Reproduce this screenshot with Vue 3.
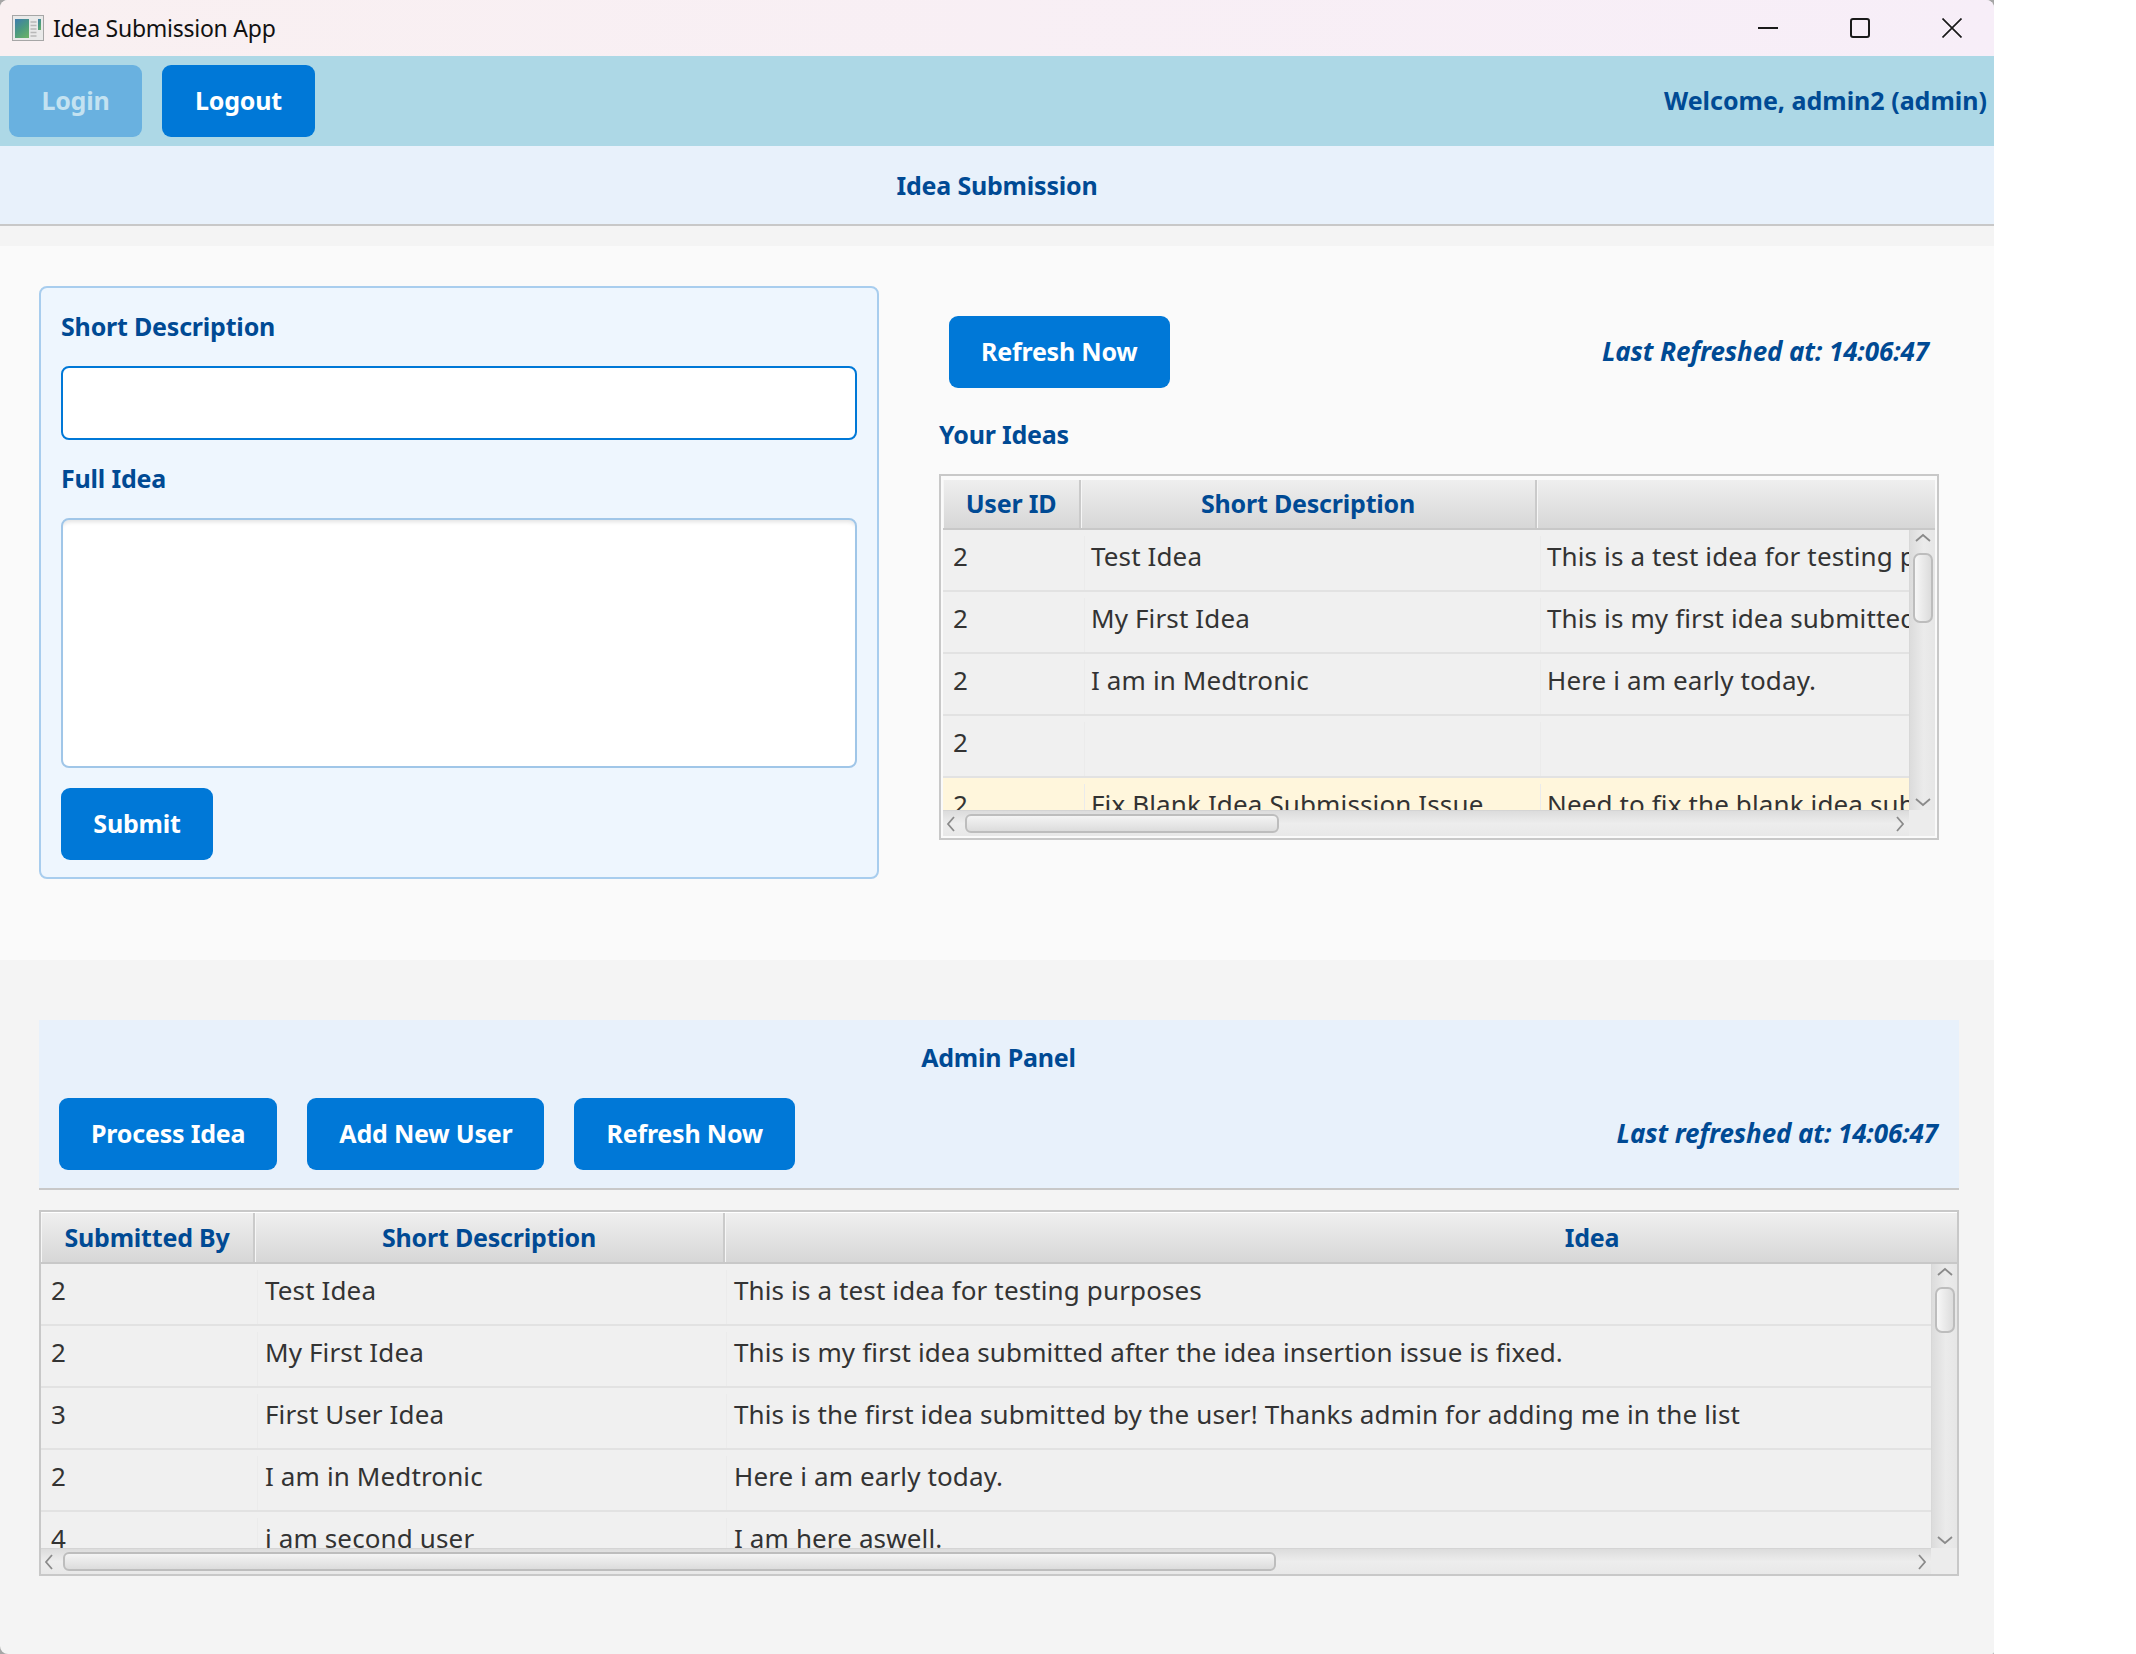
<script setup>
const myIdeas = [
  { id: '2', short: 'Test Idea', idea: 'This is a test idea for testing purposes' },
  { id: '2', short: 'My First Idea', idea: 'This is my first idea submitted after the idea insertion issue is fixed.' },
  { id: '2', short: 'I am in Medtronic', idea: 'Here i am early today.' },
  { id: '2', short: '', idea: '' },
  { id: '2', short: 'Fix Blank Idea Submission Issue', idea: 'Need to fix the blank idea submission issue', warn: true }
]
const allIdeas = [
  { id: '2', short: 'Test Idea', idea: 'This is a test idea for testing purposes' },
  { id: '2', short: 'My First Idea', idea: 'This is my first idea submitted after the idea insertion issue is fixed.' },
  { id: '3', short: 'First User Idea', idea: 'This is the first idea submitted by the user! Thanks admin for adding me in the list' },
  { id: '2', short: 'I am in Medtronic', idea: 'Here i am early today.' },
  { id: '4', short: 'i am second user', idea: 'I am here aswell.' }
]
</script>

<template>
  <div class="desktop">
  <div class="window">
    <header class="titlebar">
      <div class="title-left">
        <svg class="app-icon" width="32" height="26" viewBox="0 0 32 26">
          <defs>
            <linearGradient id="pane" x1="0.2" y1="0" x2="0.8" y2="1">
              <stop offset="0" stop-color="#4080a8" />
              <stop offset="0.5" stop-color="#4b9a80" />
              <stop offset="1" stop-color="#68b068" />
            </linearGradient>
          </defs>
          <rect x="0.5" y="0.5" width="31" height="25" fill="#e9e9e9" stroke="#a6a6a6" />
          <rect x="3" y="4" width="14" height="19" fill="url(#pane)" />
          <path d="M18.500 7h6M18.500 10.500h6M18.500 14h6M18.500 17.500h6M18.500 21h6" stroke="#b8b8b8" stroke-width="1.400" />
          <rect x="26" y="4" width="3" height="11" fill="url(#pane)" />
        </svg>
        <span class="app-title">Idea Submission App</span>
      </div>
      <div class="win-controls">
        <svg width="20" height="20" viewBox="0 0 20 20"><path d="M0 10h20" stroke="#1a1a1a" stroke-width="2" /></svg>
        <svg width="20" height="20" viewBox="0 0 20 20"><rect x="1" y="1" width="18" height="18" rx="2" fill="none" stroke="#1a1a1a" stroke-width="2" /></svg>
        <svg width="20" height="20" viewBox="0 0 20 20"><path d="M0.500 0.500l19 19M19.500 0.500l-19 19" stroke="#1a1a1a" stroke-width="1.700" /></svg>
      </div>
    </header>

    <nav class="topbar">
      <div class="topbar-actions">
        <button class="btn btn-disabled">Login</button>
        <button class="btn logout">Logout</button>
      </div>
      <span class="welcome">Welcome, admin2 (admin)</span>
    </nav>

    <div class="page-heading">Idea Submission</div>

    <main class="user-section">
      <form class="idea-form" @submit.prevent>
        <label class="field-label">Short Description</label>
        <input class="text-input" type="text" />
        <label class="field-label full-label">Full Idea</label>
        <textarea class="text-area"></textarea>
        <button class="btn submit">Submit</button>
      </form>

      <section class="ideas-col">
        <div class="refresh-row">
          <button class="btn">Refresh Now</button>
          <span class="stamp">Last Refreshed at: 14:06:47</span>
        </div>
        <h2 class="your-ideas">Your Ideas</h2>
        <div class="table table-user">
          <div class="thead cols-user">
            <div class="th">User ID</div>
            <div class="th">Short Description</div>
            <div class="th th-last"></div>
          </div>
          <div class="tbody-wrap">
            <div class="viewport">
              <div v-for="(r, i) in myIdeas" :key="i" class="row cols-user" :class="{ warn: r.warn }">
                <div class="td">{{ r.id }}</div>
                <div class="td">{{ r.short }}</div>
                <div class="td">{{ r.idea }}</div>
              </div>
            </div>
            <div class="vbar">
              <svg width="16" height="10" viewBox="0 0 16 10"><path d="M1 8l7-6 7 6" fill="none" stroke="#8a8a8a" stroke-width="1.800" /></svg>
              <div class="vthumb"></div>
              <svg class="arrow-end" width="16" height="10" viewBox="0 0 16 10"><path d="M1 2l7 6 7-6" fill="none" stroke="#8a8a8a" stroke-width="1.800" /></svg>
            </div>
          </div>
          <div class="hbar-wrap">
            <div class="hbar">
              <svg width="10" height="16" viewBox="0 0 10 16"><path d="M8 1L2 8l6 7" fill="none" stroke="#8a8a8a" stroke-width="1.800" /></svg>
              <div class="hthumb"></div>
              <svg class="arrow-end" width="10" height="16" viewBox="0 0 10 16"><path d="M2 1l6 7-6 7" fill="none" stroke="#8a8a8a" stroke-width="1.800" /></svg>
            </div>
            <div class="corner"></div>
          </div>
        </div>
      </section>
    </main>

    <section class="admin-section">
      <div class="admin-panel">
        <h2 class="admin-title">Admin Panel</h2>
        <div class="admin-actions">
          <button class="btn">Process Idea</button>
          <button class="btn">Add New User</button>
          <button class="btn">Refresh Now</button>
          <span class="stamp admin-stamp">Last refreshed at: 14:06:47</span>
        </div>
      </div>
      <div class="table table-admin">
        <div class="thead cols-admin">
          <div class="th">Submitted By</div>
          <div class="th">Short Description</div>
          <div class="th th-last">Idea</div>
        </div>
        <div class="tbody-wrap">
          <div class="viewport">
            <div v-for="(r, i) in allIdeas" :key="i" class="row cols-admin">
              <div class="td">{{ r.id }}</div>
              <div class="td">{{ r.short }}</div>
              <div class="td">{{ r.idea }}</div>
            </div>
          </div>
          <div class="vbar">
            <svg width="16" height="10" viewBox="0 0 16 10"><path d="M1 8l7-6 7 6" fill="none" stroke="#8a8a8a" stroke-width="1.800" /></svg>
            <div class="vthumb"></div>
            <svg class="arrow-end" width="16" height="10" viewBox="0 0 16 10"><path d="M1 2l7 6 7-6" fill="none" stroke="#8a8a8a" stroke-width="1.800" /></svg>
          </div>
        </div>
        <div class="hbar-wrap">
          <div class="hbar">
            <svg width="10" height="16" viewBox="0 0 10 16"><path d="M8 1L2 8l6 7" fill="none" stroke="#8a8a8a" stroke-width="1.800" /></svg>
            <div class="hthumb"></div>
            <svg class="arrow-end" width="10" height="16" viewBox="0 0 10 16"><path d="M2 1l6 7-6 7" fill="none" stroke="#8a8a8a" stroke-width="1.800" /></svg>
          </div>
          <div class="corner"></div>
        </div>
      </div>
    </section>
  </div>
  </div>
</template>

<style>
html, body { background: #ffffff; }
</style>

<style scoped>
.desktop { width: 1994px; height: 1654px; background: #a6a6a6; }
.window {
  width: 1994px;
  height: 1654px;
  display: flex;
  flex-direction: column;
  background: #f4f4f4;
  overflow: hidden;
  border-radius: 8px 8px 2px 8px;
  font-family: "Noto Sans", "Open Sans", sans-serif;
  color: #333333;
}
.titlebar {
  flex: none;
  height: 56px;
  display: flex;
  align-items: center;
  justify-content: space-between;
  background: linear-gradient(90deg, #f9f0f1, #f7eef8);
}
.title-left { display: flex; align-items: center; padding-left: 12px; }
.app-title { margin-left: 9px; font-size: 23px; color: #111111; letter-spacing: -0.25px; }
.win-controls { display: flex; gap: 72px; padding-right: 32px; }
.topbar {
  flex: none;
  height: 90px;
  display: flex;
  align-items: center;
  justify-content: space-between;
  background: #add8e6;
  padding: 0 7px 0 9px;
}
.topbar-actions { display: flex; gap: 20px; align-items: center; }
.btn {
  height: 72px;
  padding: 0 32px 3px;
  border: none;
  border-radius: 9px;
  background: #0078d7;
  color: #ffffff;
  font: bold 25px "Noto Sans", "Open Sans", sans-serif;
  letter-spacing: -0.2px;
}
.logout { width: 153px; padding: 0 0 3px; }
.btn-disabled { background: #69b1e0; color: #c3e2f1; width: 133px; padding: 0 0 3px; }
.welcome, .stamp, .page-heading, .field-label, .your-ideas, .admin-title, .th {
  font-weight: bold;
  font-size: 25px;
  line-height: 30px;
  color: #004a94;
  letter-spacing: -0.2px;
}
.welcome { letter-spacing: 0; padding-bottom: 2px; }
.stamp { font-size: 26px; font-style: italic; letter-spacing: -0.1px; padding-bottom: 3px; }
.page-heading {
  flex: none;
  height: 80px;
  box-sizing: border-box;
  display: flex;
  align-items: center;
  justify-content: center;
  padding-bottom: 1px;
  background: #e8f1fb;
  border-bottom: 2px solid #c8c8c8;
}
.field-label, .your-ideas, .admin-title { line-height: 28px; padding-bottom: 2px; }
.user-section {
  flex: none;
  height: 714px;
  box-sizing: border-box;
  margin-top: 20px;
  padding: 40px 55px 0 39px;
  background: #fafafa;
  display: grid;
  grid-template-columns: 840px 1000px;
  column-gap: 60px;
  align-items: start;
}
.idea-form {
  display: flex;
  flex-direction: column;
  align-items: flex-start;
  box-sizing: border-box;
  height: 593px;
  padding: 24px 20px 17px;
  border: 2px solid #a8cdee;
  border-radius: 8px;
  background: #eef6fe;
}
.field-label { display: block; }
.text-input {
  display: block;
  box-sizing: border-box;
  width: 796px;
  height: 74px;
  margin: 24px 0 0;
  border: 2px solid #0078d7;
  border-radius: 8px;
  background: #ffffff;
  outline: none;
}
.full-label { margin-top: 24px; }
.text-area {
  display: block;
  box-sizing: border-box;
  width: 796px;
  height: 250px;
  margin: 24px 0 0;
  border: 2px solid #a0c6e8;
  border-radius: 8px;
  background: #ffffff;
  box-shadow: inset 0 5px 4px -3px #e2e2e2;
  outline: none;
  resize: none;
}
.submit { margin-top: 20px; width: 152px; padding: 0 0 3px; }
.ideas-col { display: flex; flex-direction: column; padding-top: 30px; }
.refresh-row {
  display: flex;
  align-items: center;
  justify-content: space-between;
  padding: 0 10px;
}
.your-ideas { margin: 32px 0 24px; }
.table {
  display: flex;
  flex-direction: column;
  box-sizing: border-box;
  border: 2px solid #c8c8c8;
  background: #fafafa;
}
.table-user { height: 366px; padding: 4px 2px 2px; }
.table-admin { height: 366px; margin-top: 20px; background: #f4f4f4; }
.thead {
  flex: none;
  height: 50px;
  box-sizing: border-box;
  border-bottom: 2px solid #c8c8c8;
  overflow: hidden;
}
.table-admin .thead { height: 52px; border-top: 1px solid #ffffff; }
.cols-user { display: grid; grid-template-columns: 138px 456px 1fr; }
.cols-admin { display: grid; grid-template-columns: 213px 469px 1fr; }
.thead.cols-admin { grid-template-columns: 214px 470px 1734px; }
.th {
  display: flex;
  align-items: center;
  justify-content: center;
  padding-bottom: 2px;
  box-sizing: border-box;
  background: linear-gradient(180deg, #efefef, #d7d7d7);
  border-right: 2px solid #cacaca;
  box-shadow: inset 1px 0 0 #f6f6f6;
}
.th-last { border-right: none; }
.tbody-wrap { flex: 1; min-height: 0; display: flex; }
.viewport { flex: 1; min-width: 0; overflow: hidden; background: #f0f0f0; }
.row { height: 62px; box-sizing: border-box; border-bottom: 2px solid #e2e2e2; background: #f0f0f0; }
.row.warn { background: #fff6dc; }
.td {
  position: relative;
  height: 54px;
  padding: 0 0 6px 11px;
  font-size: 26px;
  line-height: 52px;
  white-space: nowrap;
  overflow: hidden;
  letter-spacing: 0.13px;
}
.td:first-child { padding-left: 10px; }
.table-user .td + .td { padding-left: 10px; }
.td + .td::before {
  content: "";
  position: absolute;
  left: 3px;
  top: 6px;
  bottom: 0;
  width: 1px;
  background: #ebebeb;
}
.vbar {
  flex: none;
  width: 26px;
  display: flex;
  flex-direction: column;
  align-items: center;
  padding: 3px 0;
  box-sizing: border-box;
  background: linear-gradient(90deg, #dcdcdc, #ebebeb 55%, #e6e6e6);
  border-left: 1px solid #d8d8d8;
}
.vthumb {
  box-sizing: border-box;
  width: 20px;
  height: 70px;
  margin-top: 10px;
  border: 2px solid #bdbdbd;
  border-radius: 7px;
  background: linear-gradient(90deg, #f7f7f7, #dcdcdc);
}
.table-admin .vthumb { height: 46px; }
.arrow-end { margin-top: auto; }
.hbar-wrap { flex: none; height: 26px; display: flex; }
.hbar {
  flex: 1;
  display: flex;
  align-items: center;
  padding: 0 4px 0 3px;
  background: linear-gradient(180deg, #dcdcdc, #ededed 50%, #e8e8e8);
  border-top: 1px solid #d4d4d4;
  box-sizing: border-box;
}
.hbar .arrow-end { margin: 0 0 0 auto; }
.hthumb {
  box-sizing: border-box;
  width: 314px;
  height: 19px;
  margin-left: 9px;
  border: 2px solid #bdbdbd;
  border-radius: 6px;
  background: linear-gradient(180deg, #f4f4f4, #dcdcdc);
}
.table-admin .hthumb { width: 1213px; }
.corner { flex: none; width: 26px; background: #ececec; }
.admin-section { flex: 1; padding: 60px 35px 0 39px; }
.admin-panel {
  box-sizing: border-box;
  height: 170px;
  padding: 23px 21px 0 20px;
  background: #e8f1fb;
  border-bottom: 2px solid #c8c8c8;
}
.admin-title { margin: 0; text-align: center; }
.admin-actions { display: flex; align-items: center; gap: 30px; margin-top: 25px; }
.admin-stamp { margin-left: auto; }
</style>
